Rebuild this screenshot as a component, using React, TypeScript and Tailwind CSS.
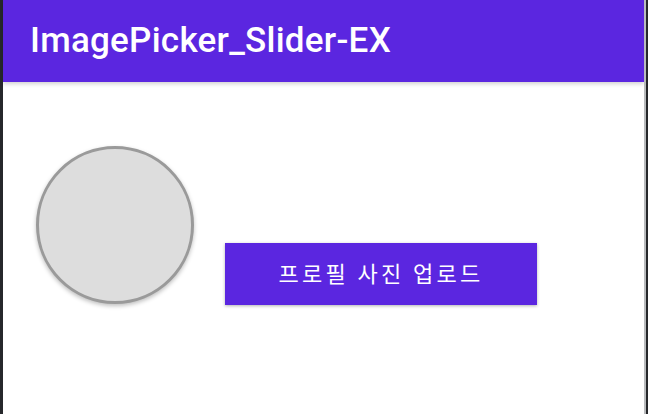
const App = () => {
  return (
    <div className="flex h-[414px] w-[648px] bg-[#202124]" style={{ fontFamily: 'Roboto, "Noto Sans CJK KR", sans-serif' }}>
      <div className="w-[3px] shrink-0 bg-[#26282b]" />
      <div className="flex flex-1 flex-col bg-white">
        <header className="flex h-[82px] shrink-0 items-center bg-[#5b26e0] pl-[27px] shadow-[0_2px_4px_rgba(0,0,0,0.18)]">
          <h1 className="text-[35px] font-medium tracking-[0.25px] text-white">ImagePicker_Slider-EX</h1>
        </header>
        <main className="flex items-end gap-[31px] pl-[33px] pt-[64px]">
          <div className="h-[158px] w-[158px] rounded-full border-[3px] border-[#9a9a9a] bg-[#dddddd] shadow-[0_2px_4px_rgba(0,0,0,0.25)]" />
          <button className="mb-[-1px] flex h-[62px] w-[312px] items-center justify-center bg-[#5b26e0] text-[22px] font-normal tracking-[3.2px] text-white shadow-[0_1px_3px_rgba(0,0,0,0.3)]">
            프로필 사진 업로드
          </button>
        </main>
      </div>
      <div className="w-[2px] shrink-0 bg-[#b9bbbd]" />
      <div className="w-[2px] shrink-0 bg-[#26282b]" />
    </div>
  );
};

export default App;
